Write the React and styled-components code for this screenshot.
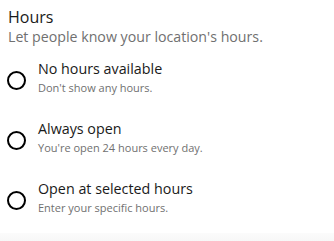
import React from "react";
import styled, { createGlobalStyle } from "styled-components";

const Global = createGlobalStyle`
  html, body { margin: 0; padding: 0; background: #ffffff; }
  body { font-family: "Open Sans", "Noto Sans", sans-serif; }
`;

const Page = styled.div`
  width: 334px;
  height: 241px;
  display: flex;
  flex-direction: column;
  overflow: hidden;
`;

const Content = styled.div`
  flex: 1;
  padding: 6.5px 8px 0 8px;
  display: flex;
  flex-direction: column;
`;

const Title = styled.div`
  font-size: 16px;
  line-height: 20px;
  color: #1a1a1a;
`;

const Subtitle = styled.div`
  font-size: 14.2px;
  line-height: 18px;
  color: #707070;
  margin-top: 1px;
`;

const Options = styled.div`
  display: flex;
  flex-direction: column;
  gap: 23px;
  margin-top: 13px;
`;

const Option = styled.label`
  display: flex;
  align-items: flex-start;
  gap: 12px;
`;

const Circle = styled.span`
  box-sizing: border-box;
  width: 19px;
  height: 19px;
  border: 2px solid #000;
  border-radius: 50%;
  flex: none;
  margin-top: 12.5px;
  margin-left: -1px;
`;

const Texts = styled.div`
  display: flex;
  flex-direction: column;
`;

const Label = styled.div`
  font-size: 14.3px;
  line-height: 20px;
  color: #1a1a1a;
`;

const Hint = styled.div`
  font-size: 11px;
  line-height: 16px;
  color: #707070;
  margin-top: 1px;
`;

const Footer = styled.div`
  height: 8px;
  background: linear-gradient(#fbfbfb, #f7f7f7);
`;

const options = [
  { label: "No hours available", hint: "Don't show any hours." },
  { label: "Always open", hint: "You're open 24 hours every day." },
  { label: "Open at selected hours", hint: "Enter your specific hours." },
];

export default function App() {
  return (
    <Page>
      <Global />
      <Content>
        <Title>Hours</Title>
        <Subtitle>Let people know your location's hours.</Subtitle>
        <Options>
          {options.map((o) => (
            <Option key={o.label}>
              <Circle />
              <Texts>
                <Label>{o.label}</Label>
                <Hint>{o.hint}</Hint>
              </Texts>
            </Option>
          ))}
        </Options>
      </Content>
      <Footer />
    </Page>
  );
}
